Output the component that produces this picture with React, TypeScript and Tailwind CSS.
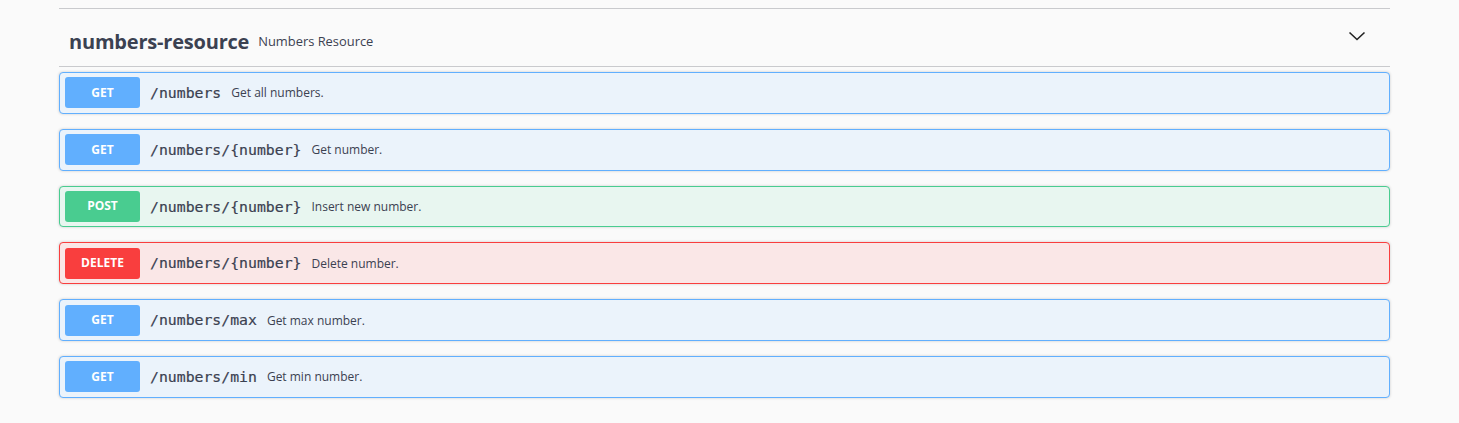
import React from "react";

type Op = { method: "GET" | "POST" | "DELETE"; path: string; desc: string };

const ops: Op[] = [
  { method: "GET", path: "/numbers", desc: "Get all numbers." },
  { method: "GET", path: "/numbers/{number}", desc: "Get number." },
  { method: "POST", path: "/numbers/{number}", desc: "Insert new number." },
  { method: "DELETE", path: "/numbers/{number}", desc: "Delete number." },
  { method: "GET", path: "/numbers/max", desc: "Get max number." },
  { method: "GET", path: "/numbers/min", desc: "Get min number." },
];

const styles = {
  GET: {
    block: "border-[#61affe] bg-[#ebf3fb]",
    badge: "bg-[#61affe]",
  },
  POST: {
    block: "border-[#49cc90] bg-[#e8f6f0]",
    badge: "bg-[#49cc90]",
  },
  DELETE: {
    block: "border-[#f93e3e] bg-[#fae7e7]",
    badge: "bg-[#f93e3e]",
  },
};

export default function App() {
  return (
    <div className="min-h-[423px] w-full bg-[#fafafa] pt-[8px] text-[#3b4151]" style={{ fontFamily: '"Open Sans", sans-serif' }}>
      <div className="ml-[59px] w-[1331px]">
        <div className="flex h-[59px] items-center border-y border-[#c9cacd] pl-[10px] pr-[24px]">
          <div className="flex items-center pt-[8px]">
            <span className="text-[20px] font-bold leading-none tracking-[-0.2px] text-[#3b4151]">numbers-resource</span>
            <span className="ml-[9px] text-[12.9px] leading-none text-[#3b4151]">Numbers Resource</span>
          </div>
          <div className="flex-1" />
          <svg width="18" height="12" viewBox="0 0 18 12" className="mt-[-4px]">
            <path d="M1.5 2.5 L9 9.5 L16.5 2.5" fill="none" stroke="#222" strokeWidth="1.6" />
          </svg>
        </div>
        <div className="mt-[5px] flex flex-col gap-[15px]">
          {ops.map((op, i) => (
            <div
              key={i}
              className={`flex h-[41.8px] items-center rounded-[4px] border px-[5px] shadow-[0_0_3px_rgba(0,0,0,0.19)] ${styles[op.method].block}`}
            >
              <div
                className={`flex h-[31px] w-[75px] items-center justify-center rounded-[3px] text-[12px] font-bold text-white ${styles[op.method].badge}`}
              >
                {op.method}
              </div>
              <span
                className="pl-[10px] pr-[10px] pt-[1px] text-[14.8px] font-normal leading-none text-[#3b4151] [-webkit-text-stroke:0.2px_#3b4151]"
                style={{ fontFamily: '"DejaVu Sans Mono", monospace' }}
              >
                {op.path}
              </span>
              <span className="pt-[1px] text-[12px] leading-none text-[#3b4151]">{op.desc}</span>
            </div>
          ))}
        </div>
      </div>
    </div>
  );
}
